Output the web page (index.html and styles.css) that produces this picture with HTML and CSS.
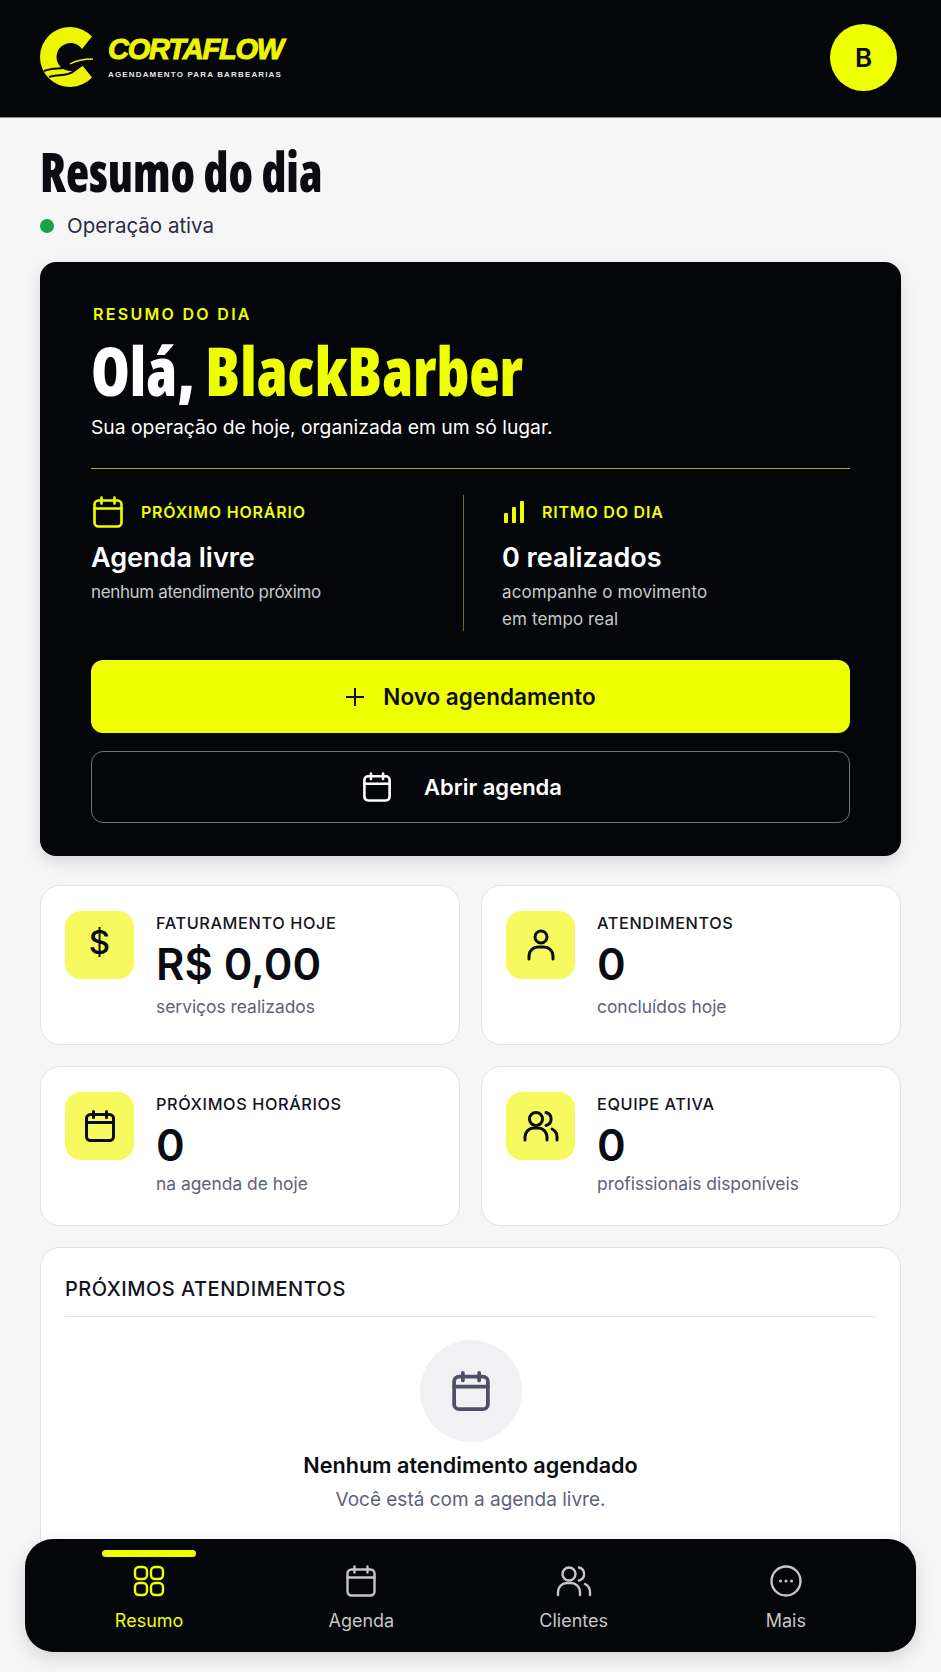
FILE: index.html
```html
<!DOCTYPE html>
<html lang="pt-BR">
  <head>
    <title>CortaFlow - Resumo do dia</title>
    <meta charset="UTF-8">
    <link rel="stylesheet" href="styles.css">
  </head>
  <body>
    <svg class="sprites" width="0" height="0" aria-hidden="true">
      <symbol id="i-cal" viewBox="0 0 30 32">
        <path d="M8.5 1.5v6M21.5 1.5v6M1.5 12.5h27"/>
        <rect x="1.5" y="4.5" width="27" height="26" rx="4"/>
      </symbol>
      <symbol id="i-user" viewBox="0 0 28 32">
        <circle cx="14" cy="8" r="6"/>
        <path d="M2 30v-3a9 9 0 0 1 9-9h6a9 9 0 0 1 9 9v3"/>
      </symbol>
      <symbol id="i-users" viewBox="0 0 36 32">
        <circle cx="13" cy="9" r="6.5"/>
        <path d="M2 30v-3a9 9 0 0 1 9-9h4a9 9 0 0 1 9 9v3M23 2.5a6.7 6.7 0 0 1 0 13M29 19a9 9 0 0 1 5 8v3"/>
      </symbol>
      <symbol id="i-grid" viewBox="0 0 32 32">
        <rect x="2" y="2" width="12" height="12" rx="4"/>
        <rect x="18" y="2" width="12" height="12" rx="4"/>
        <rect x="2" y="18" width="12" height="12" rx="4"/>
        <rect x="18" y="18" width="12" height="12" rx="4"/>
      </symbol>
    </svg>

    <header class="topbar">
      <div class="brand">
        <svg class="brand-mark" viewBox="0 0 60 60">
          <path class="mark-c" d="M52 9.6A30 30 0 1 0 52 50.4L42 38A14 14 0 1 1 42 22Z"/>
          <path class="mark-cut" d="M4 44C14 40 22 43 30 39"/>
          <path class="mark-cut" d="M9 50C18 47 27 50 34 44S42 38 45 37"/>
          <path class="mark-tip" d="M30 37C37 33 45 32 53 32"/>
        </svg>
        <div class="brand-text">
          <div class="brand-name">CORTAFLOW</div>
          <div class="brand-tag">AGENDAMENTO PARA BARBEARIAS</div>
        </div>
      </div>
      <div class="avatar">B</div>
    </header>

    <main class="page">
      <h1 class="page-title">Resumo do dia</h1>
      <div class="status"><span class="status-dot"></span>Operação ativa</div>

      <section class="hero">
        <div class="hero-eyebrow">RESUMO DO DIA</div>
        <h2 class="hero-title">Olá, <em>BlackBarber</em></h2>
        <p class="hero-sub">Sua operação de hoje, organizada em um só lugar.</p>

        <div class="hero-cols">
          <div class="hero-col">
            <div class="col-head">
              <svg class="icon col-icon"><use href="#i-cal"/></svg>
              PRÓXIMO HORÁRIO
            </div>
            <div class="col-value">Agenda livre</div>
            <div class="col-note col-note-tight">nenhum atendimento próximo</div>
          </div>
          <div class="hero-col hero-col-right">
            <div class="col-head">
              <svg class="bars" viewBox="0 0 20 22">
                <rect x="0" y="12" width="4" height="10" rx="1"/>
                <rect x="8" y="6" width="4" height="16" rx="1"/>
                <rect x="16" y="0" width="4" height="22" rx="1"/>
              </svg>
              RITMO DO DIA
            </div>
            <div class="col-value">0 realizados</div>
            <div class="col-note">acompanhe o movimento<br>em tempo real</div>
          </div>
        </div>

        <button class="btn btn-primary">
          <svg class="plus" viewBox="0 0 20 20"><path d="M10 1v18M1 10h18"/></svg>
          Novo agendamento
        </button>
        <button class="btn btn-ghost">
          <svg class="icon btn-icon"><use href="#i-cal"/></svg>
          Abrir agenda
        </button>
      </section>

      <section class="stats">
        <div class="stat">
          <div class="stat-icon"><span class="dollar">$</span></div>
          <div>
            <div class="stat-label">FATURAMENTO HOJE</div>
            <div class="stat-value">R$ 0,00</div>
            <div class="stat-note">serviços realizados</div>
          </div>
        </div>
        <div class="stat">
          <div class="stat-icon"><svg class="icon icon-user"><use href="#i-user"/></svg></div>
          <div>
            <div class="stat-label">ATENDIMENTOS</div>
            <div class="stat-value">0</div>
            <div class="stat-note">concluídos hoje</div>
          </div>
        </div>
        <div class="stat">
          <div class="stat-icon"><svg class="icon icon-cal"><use href="#i-cal"/></svg></div>
          <div>
            <div class="stat-label">PRÓXIMOS HORÁRIOS</div>
            <div class="stat-value">0</div>
            <div class="stat-note stat-note-up">na agenda de hoje</div>
          </div>
        </div>
        <div class="stat">
          <div class="stat-icon"><svg class="icon icon-users"><use href="#i-users"/></svg></div>
          <div>
            <div class="stat-label">EQUIPE ATIVA</div>
            <div class="stat-value">0</div>
            <div class="stat-note stat-note-up">profissionais disponíveis</div>
          </div>
        </div>
      </section>

      <section class="upcoming">
        <h3 class="upcoming-title">PRÓXIMOS ATENDIMENTOS</h3>
        <div class="empty">
          <div class="empty-circle"><svg class="icon empty-icon"><use href="#i-cal"/></svg></div>
          <div class="empty-title">Nenhum atendimento agendado</div>
          <div class="empty-note">Você está com a agenda livre.</div>
        </div>
      </section>
    </main>

    <nav class="tabbar">
      <a class="tab tab-on">
        <span class="tab-mark"></span>
        <svg class="icon tab-icon"><use href="#i-grid"/></svg>
        Resumo
      </a>
      <a class="tab">
        <svg class="icon tab-icon"><use href="#i-cal"/></svg>
        Agenda
      </a>
      <a class="tab">
        <svg class="icon tab-icon tab-icon-users"><use href="#i-users"/></svg>
        Clientes
      </a>
      <a class="tab">
        <svg class="icon tab-icon" viewBox="0 0 32 32">
          <circle cx="16" cy="16" r="14.5"/>
          <path class="more-dots" d="M10.5 16h.01M16 16h.01M21.5 16h.01"/>
        </svg>
        Mais
      </a>
    </nav>
  </body>
</html>
```

FILE: styles.css
```css
html, body {
  height: 100%;
}
body {
  margin: 0;
  height: 1672px;
  overflow: hidden;
  position: relative;
  background: #f6f6f6;
  color: #0b0c12;
  font-family: 'Inter', 'Noto Sans', sans-serif;
}
h1, h2, h3, p {
  margin: 0;
}
.sprites {
  position: absolute;
}
.icon {
  fill: none;
  stroke: currentColor;
  stroke-width: 3;
  stroke-linecap: round;
  stroke-linejoin: round;
}

/* top bar */
.topbar {
  height: 118px;
  box-sizing: border-box;
  padding: 0 44px 3px 40px;
  display: flex;
  align-items: center;
  justify-content: space-between;
  background: #05060a;
  border-bottom: 1px solid #8a8a8a;
}
.brand {
  display: flex;
  align-items: center;
  gap: 8px;
}
.brand-mark {
  width: 60px;
  height: 60px;
}
.mark-c {
  fill: #eef500;
}
.mark-cut {
  fill: none;
  stroke: #05060a;
  stroke-width: 2;
}
.mark-tip {
  fill: none;
  stroke: #eef500;
  stroke-width: 1.4;
}
.brand-name {
  font-family: 'Liberation Sans', sans-serif;
  font-size: 29px;
  line-height: 30px;
  font-weight: 700;
  font-style: italic;
  letter-spacing: -1.2px;
  color: #eef500;
  -webkit-text-stroke: 1px #eef500;
}
.brand-tag {
  margin-top: 5px;
  font-family: 'Liberation Sans', sans-serif;
  font-size: 8px;
  line-height: 11px;
  font-weight: 700;
  letter-spacing: 1.15px;
  color: #e6e6e6;
}
.avatar {
  width: 67px;
  height: 67px;
  border-radius: 50%;
  background: #eeff00;
  display: flex;
  align-items: center;
  justify-content: center;
  font-size: 26px;
  font-weight: 600;
}

/* page */
.page {
  padding: 24px 40px 0;
}
.page-title {
  width: fit-content;
  font-family: 'Open Sans', 'Liberation Sans', sans-serif;
  font-stretch: 75%;
  font-size: 54px;
  line-height: 58px;
  font-weight: 800;
  transform: scaleX(0.882);
  transform-origin: left;
}
.status {
  margin-top: 13px;
  display: flex;
  align-items: center;
  gap: 13px;
  font-size: 20.5px;
  line-height: 26px;
  color: #2a2c44;
}
.status-dot {
  width: 14px;
  height: 14px;
  border-radius: 50%;
  background: #16a34a;
}

/* hero */
.hero {
  margin-top: 23px;
  height: 594px;
  box-sizing: border-box;
  padding: 41px 51px 0;
  background: #05060a;
  border-radius: 16px;
  box-shadow: 0 6px 16px rgba(0,0,0,0.12);
  color: #fff;
}
.hero-eyebrow {
  padding-left: 2px;
  font-size: 16px;
  line-height: 22px;
  font-weight: 600;
  letter-spacing: 2.3px;
  color: #eeff00;
}
.hero-title {
  width: fit-content;
  margin-top: 9px;
  font-family: 'Open Sans', 'Liberation Sans', sans-serif;
  font-stretch: 75%;
  font-size: 68px;
  line-height: 72px;
  font-weight: 800;
  transform: scaleX(0.92);
  transform-origin: left;
}
.hero-title em {
  font-style: normal;
  color: #eeff00;
}
.hero-sub {
  margin-top: 7px;
  font-size: 19.3px;
  line-height: 28px;
}
.hero-cols {
  margin-top: 27px;
  padding-top: 26px;
  border-top: 1px solid #a8ad1c;
  display: grid;
  grid-template-columns: 372px 1fr;
}
.hero-col {
  height: 136px;
}
.hero-col-right {
  padding-left: 38px;
  border-left: 1px solid #6d7012;
}
.col-head {
  height: 34px;
  display: flex;
  align-items: center;
  font-size: 16px;
  font-weight: 600;
  letter-spacing: 0.8px;
  color: #eeff00;
}
.col-icon {
  width: 30px;
  height: 32px;
  margin: 0 18px 0 2px;
  stroke-width: 2.6;
}
.bars {
  width: 20px;
  height: 22px;
  margin: 0 18px 0 2px;
  fill: #eeff00;
}
.col-value {
  margin-top: 11px;
  font-size: 27px;
  line-height: 36px;
  font-weight: 600;
}
.col-note {
  margin-top: 3px;
  font-size: 17px;
  line-height: 27px;
  letter-spacing: 0.1px;
  color: #c9c9c9;
}
.col-note-tight {
  letter-spacing: -0.36px;
}
.btn {
  width: 100%;
  display: flex;
  align-items: center;
  justify-content: center;
  font-family: inherit;
  font-weight: 600;
  border-radius: 12px;
  box-sizing: border-box;
}
.btn-primary {
  height: 73px;
  margin-top: 29px;
  padding-bottom: 1px;
  background: #f0ff00;
  border: none;
  color: #0b0c12;
  font-size: 22.5px;
}
.plus {
  width: 20px;
  height: 20px;
  margin-right: 18px;
  fill: none;
  stroke: #0b0c12;
  stroke-width: 2;
}
.btn-ghost {
  height: 72px;
  margin-top: 18px;
  padding-right: 22px;
  background: transparent;
  border: 1px solid #74757a;
  color: #fff;
  font-size: 22px;
}
.btn-icon {
  width: 28px;
  height: 30px;
  margin-right: 33px;
  stroke-width: 2.8;
}

/* stat cards */
.stats {
  margin-top: 29px;
  display: grid;
  grid-template-columns: 1fr 1fr;
  gap: 21px;
}
.stat {
  height: 160px;
  box-sizing: border-box;
  padding: 25px 24px 0;
  display: flex;
  gap: 22px;
  background: #fff;
  border: 1.5px solid #e2e2e8;
  border-radius: 20px;
}
.stat-icon {
  width: 69px;
  height: 68px;
  flex: none;
  border-radius: 16px;
  background: #f7fa5e;
  display: flex;
  align-items: center;
  justify-content: center;
}
.dollar {
  margin-top: -6px;
  font-size: 33px;
  font-weight: 500;
}
.icon-user {
  width: 28px;
  height: 32px;
}
.icon-cal {
  width: 30px;
  height: 32px;
}
.icon-users {
  width: 36px;
  height: 32px;
}
.stat-label {
  margin-top: 1px;
  font-size: 16.3px;
  line-height: 22px;
  font-weight: 500;
  letter-spacing: 0.6px;
  color: #14151f;
}
.stat-value {
  margin-top: 5px;
  font-size: 43.5px;
  line-height: 50px;
  font-weight: 600;
}
.stat-note {
  margin-top: 5px;
  font-size: 17.4px;
  line-height: 26px;
  color: #60617a;
}
.stat-note-up {
  margin-top: 1px;
}

/* upcoming panel */
.upcoming {
  margin-top: 21px;
  height: 320px;
  box-sizing: border-box;
  padding: 26px 24px 0;
  background: #fff;
  border: 1.5px solid #e2e2e8;
  border-radius: 20px;
}
.upcoming-title {
  padding-bottom: 12px;
  border-bottom: 1.5px solid #e2e2e8;
  font-size: 20px;
  line-height: 30px;
  font-weight: 500;
  letter-spacing: 0.5px;
  color: #14151f;
}
.empty {
  display: flex;
  flex-direction: column;
  align-items: center;
  padding-top: 23px;
}
.empty-circle {
  width: 102px;
  height: 102px;
  border-radius: 50%;
  background: #f1f1f3;
  display: flex;
  align-items: center;
  justify-content: center;
}
.empty-icon {
  width: 38px;
  height: 40px;
  color: #4f5068;
}
.empty-title {
  margin-top: 8px;
  font-size: 21.6px;
  line-height: 30px;
  font-weight: 600;
}
.empty-note {
  margin-top: 6px;
  font-size: 19px;
  line-height: 28px;
  color: #60617a;
}

/* bottom tabs */
.tabbar {
  position: absolute;
  left: 25px;
  right: 25px;
  top: 1539px;
  height: 113px;
  box-sizing: border-box;
  padding: 0 24px 0 18px;
  display: grid;
  grid-template-columns: repeat(4, 1fr);
  background: #05060a;
  border-radius: 28px;
  box-shadow: 0 6px 18px rgba(0,0,0,0.14);
}
.tab {
  position: relative;
  padding-top: 26px;
  display: flex;
  flex-direction: column;
  align-items: center;
  font-size: 18px;
  line-height: 26px;
  color: #c6c6c6;
}
.tab-on {
  color: #eeff00;
}
.tab-mark {
  position: absolute;
  top: 11px;
  left: 50%;
  margin-left: -47px;
  width: 94px;
  height: 7px;
  border-radius: 4px;
  background: #eeff00;
}
.tab-icon {
  width: 32px;
  height: 32px;
  margin-bottom: 11px;
  stroke-width: 2.4;
}
.tab-icon-users {
  width: 36px;
}
.more-dots {
  stroke-width: 3;
}
```
